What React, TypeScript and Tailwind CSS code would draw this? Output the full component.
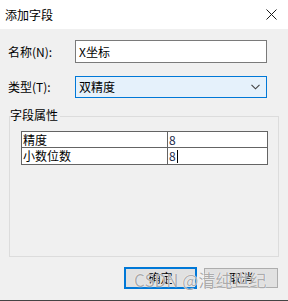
import type { ReactNode } from "react";

const rows: Array<[string, string]> = [
  ["精度", "8"],
  ["小数位数", "8"],
];

export default function App() {
  return (
    <div className="relative flex h-[301px] w-[288px] flex-col overflow-hidden bg-[#f0f0f0] font-['Noto_Sans_CJK_SC',sans-serif] text-[12px] leading-none text-black">
      <header className="flex h-[29px] shrink-0 items-center justify-between bg-white pl-[5px] pr-[11px]">
        <span>添加字段</span>
        <svg width="11" height="11" viewBox="0 0 11 11" aria-hidden="true">
          <path d="M0.5 0.5L10.5 10.5M10.5 0.5L0.5 10.5" stroke="#1a1a1a" strokeWidth="1" />
        </svg>
      </header>

      <div className="flex flex-col pl-[8px]">
        <FieldRow label="名称(N):" className="mt-[11px]">
          <div className="flex h-[23px] w-[192px] items-center border border-[#7a7a7a] bg-white pl-[3px]">
            X坐标
          </div>
        </FieldRow>

        <FieldRow label="类型(T):" className="mt-[13px]">
          <div className="flex h-[22px] w-[192px] items-center justify-between border border-[#0078d7] bg-[#e5f1fb] pl-[3px] pr-[6px]">
            <span>双精度</span>
            <svg width="9" height="6" viewBox="0 0 9 6" aria-hidden="true">
              <path d="M0.5 0.8L4.5 4.8L8.5 0.8" fill="none" stroke="#404040" strokeWidth="1.1" />
            </svg>
          </div>
        </FieldRow>

        <div className="relative ml-px mt-[18px] h-[141px] w-[270px] border border-[#dcdcdc] pl-[11px] pt-[14px]">
          <span className="absolute left-[0px] top-[-8px] bg-[#f0f0f0] pr-[2px]">字段属性</span>
          <div className="w-[247px] border border-[#646464] bg-white">
            {rows.map(([name, value], i) => (
              <div
                key={name}
                className={`flex h-[16px] ${i < rows.length - 1 ? "border-b border-[#646464]" : "h-[15px]"}`}
              >
                <div className="flex w-[146px] items-center border-r border-[#646464] pl-[1px]">{name}</div>
                <div className="flex items-center pl-[1px] text-[#1c2a4a]">
                  {value}
                  {i === rows.length - 1 && <span className="ml-px h-[13px] w-px bg-black" />}
                </div>
              </div>
            ))}
          </div>
        </div>
      </div>

      <div className="mt-[10px] flex items-center justify-end gap-[7px] pr-[10px]">
        <button className="flex h-[22px] w-[73px] items-center justify-center border-2 border-[#0078d7] bg-[#e1e1e1]">
          确定
        </button>
        <button className="flex h-[20px] w-[74px] items-center justify-center border border-[#adadad] bg-[#e1e1e1]">
          取消
        </button>
      </div>

      <div className="mt-auto h-px bg-[#444]" />

      {/* watermark over the buttons */}
      <span className="pointer-events-none absolute left-[134px] top-[271px] text-[17px] text-[rgba(100,100,100,0.55)] [text-shadow:0_0_1px_#fff,0_0_1px_#fff]">
        CSDN @清纯世纪
      </span>
    </div>
  );
}

function FieldRow({ label, className, children }: { label: string; className?: string; children: ReactNode }) {
  return (
    <div className={`flex items-center ${className ?? ""}`}>
      <span className="w-[67px]">{label}</span>
      {children}
    </div>
  );
}
